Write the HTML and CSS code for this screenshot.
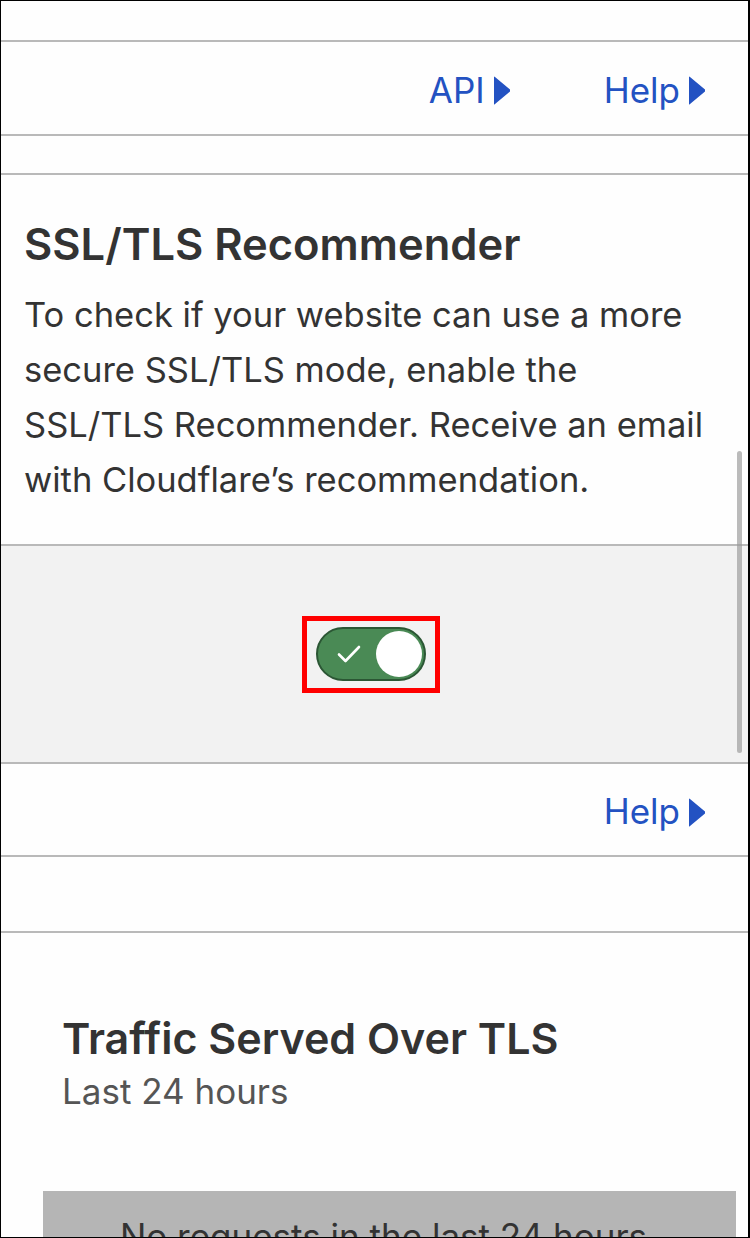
FILE: index.html
```html
<!DOCTYPE html>
<html>
<head>
<meta charset="utf-8">
<link rel="stylesheet" href="styles.css">
</head>
<body>
<div class="frame">
  <div class="spacer top"></div>
  <div class="links">
    <a class="link">API<svg class="tri" viewBox="0 0 16 29"><path d="M0 1 Q0 0 1 1 L16 13.5 L16 15.5 L1 28 Q0 29 0 28 Z"/></svg></a>
    <a class="link">Help<svg class="tri" viewBox="0 0 16 29"><path d="M0 1 Q0 0 1 1 L16 13.5 L16 15.5 L1 28 Q0 29 0 28 Z"/></svg></a>
  </div>
  <div class="spacer mid"></div>
  <div class="card">
    <h2 class="card-title">SSL/TLS Recommender</h2>
    <p class="card-text">To check if your website can use a more secure SSL/TLS mode, enable the SSL/TLS Recommender. Receive an email with Cloudflare’s recommendation.</p>
  </div>
  <div class="toggle-area">
    <div class="highlight">
      <div class="toggle">
        <svg class="check" viewBox="0 0 24 18"><path d="M2 9.5 L8.5 16 L22 2" fill="none" stroke="#fff" stroke-width="2.6" stroke-linecap="round" stroke-linejoin="round"/></svg>
        <div class="knob"></div>
      </div>
    </div>
  </div>
  <div class="links single">
    <a class="link">Help<svg class="tri" viewBox="0 0 16 29"><path d="M0 1 Q0 0 1 1 L16 13.5 L16 15.5 L1 28 Q0 29 0 28 Z"/></svg></a>
  </div>
  <div class="spacer gap"></div>
  <div class="traffic">
    <h2 class="traffic-title">Traffic Served Over TLS</h2>
    <div class="traffic-sub">Last 24 hours</div>
    <div class="empty-box">No requests in the last 24 hours</div>
  </div>
  <div class="scrollbar"></div>
</div>
</body>
</html>
```
FILE: styles.css
```css
* { box-sizing: border-box; }
html, body { margin: 0; padding: 0; }
body {
  width: 750px;
  height: 1238px;
  overflow: hidden;
  background: #fff;
  font-family: Inter, "Noto Sans", sans-serif;
  color: #333;
}
.frame {
  position: relative;
  width: 750px;
  height: 1238px;
  border: 1px solid #000;
  border-right-width: 2px;
  overflow: hidden;
  background: #fefefe;
}
.spacer, .links, .card, .toggle-area {
  border-bottom: 2px solid #b9b9b9;
}
.spacer.top { height: 41px; }
.spacer.mid { height: 39px; }
.spacer.gap { height: 76px; }
.links {
  height: 94px;
  display: flex;
  justify-content: flex-end;
  align-items: center;
  gap: 94px;
  padding-right: 43px;
}
.link {
  display: flex;
  align-items: center;
  color: #2352c2;
  font-size: 35px;
  text-decoration: none;
  margin-top: 3px;
}
.tri {
  width: 16px;
  height: 29px;
  margin-left: 9px;
  fill: #2352c2;
  margin-top: 2px;
}
.card {
  height: 371px;
  padding: 44px 34px 0 23px;
}
.card-title {
  margin: 0;
  font-size: 43.5px;
  font-weight: 600;
  line-height: 50px;
  color: #333;
}
.card-text {
  margin: 18px 0 0;
  font-size: 34.5px;
  line-height: 55px;
  color: #333;
}
.toggle-area {
  height: 218px;
  background: #f2f2f2;
  display: flex;
  align-items: center;
  justify-content: center;
}
.highlight {
  border: 5px solid #ff0000;
  width: 138px;
  height: 77px;
  display: flex;
  align-items: center;
  justify-content: center;
  margin-left: -7px;
}
.toggle {
  width: 110px;
  height: 54px;
  border-radius: 27px;
  background: #4a8a55;
  border: 2px solid #2b5634;
  display: flex;
  align-items: center;
  justify-content: space-between;
  padding: 0 2px 0 19px;
}
.check { width: 24px; height: 18px; }
.knob {
  width: 46px;
  height: 46px;
  border-radius: 50%;
  background: #fff;
}
.links.single { height: 93px; }
.traffic {
  padding: 80px 12px 0 42px;
}
.traffic-title {
  margin: 0 0 0 19px;
  font-size: 43px;
  font-weight: 600;
  line-height: 50px;
  color: #333;
}
.traffic-sub {
  margin: 6px 0 0 19px;
  font-size: 35px;
  line-height: 44px;
  color: #555;
}
.empty-box {
  margin-top: 78px;
  height: 120px;
  background: #b5b5b5;
  font-size: 35px;
  color: #333;
  text-align: center;
  padding-top: 24px;
  padding-right: 12px;
}
.scrollbar {
  position: absolute;
  left: 736px;
  top: 450px;
  width: 5px;
  height: 302px;
  border-radius: 3px;
  background: rgba(150, 150, 150, 0.65);
}
```
